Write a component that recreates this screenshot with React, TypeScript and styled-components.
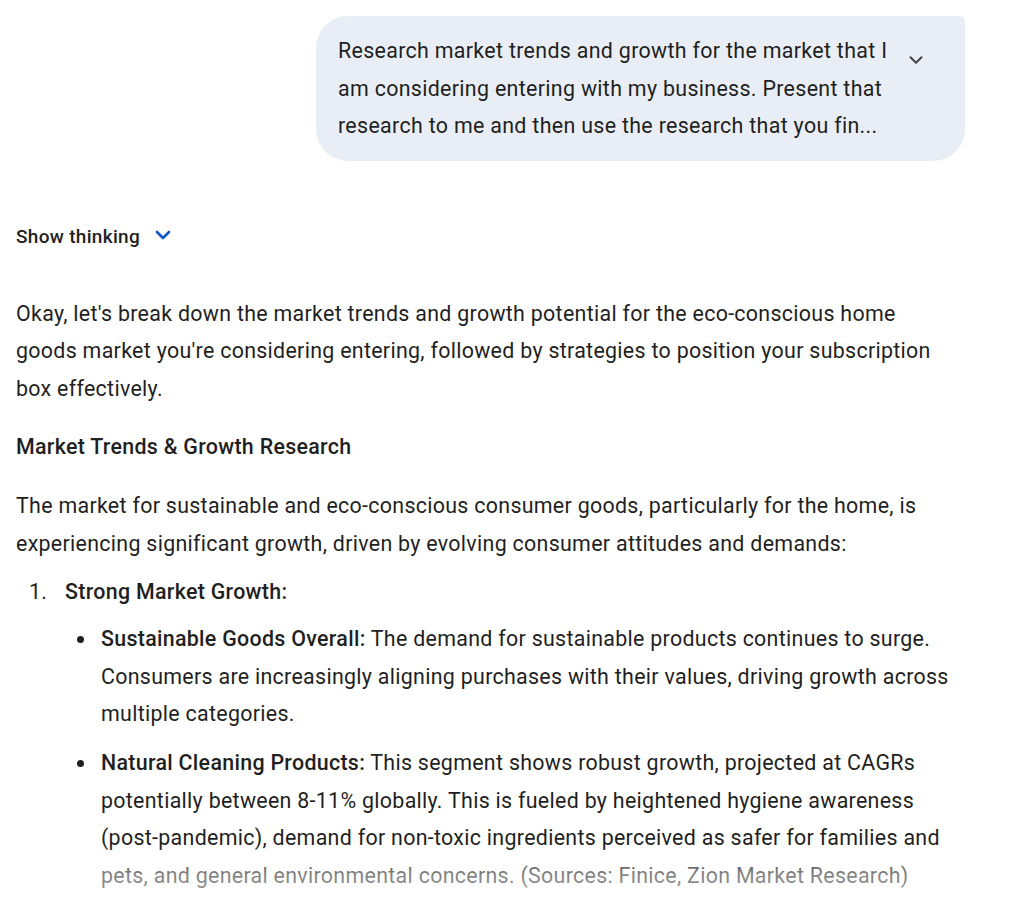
import React from "react";
import styled, { createGlobalStyle } from "styled-components";

const Global = createGlobalStyle`
  html, body { margin: 0; padding: 0; background: #ffffff; }
  body { font-family: Roboto, "Noto Sans", "Liberation Sans", sans-serif; color: #1f1f1f; }
  * { box-sizing: border-box; }
`;

const Page = styled.main`
  position: relative;
  width: 1024px;
  height: 914px;
  overflow: hidden;
  padding: 16px 0 0 16px;
`;

const Conversation = styled.div`
  width: 949px;
  display: flex;
  flex-direction: column;
`;

const UserRow = styled.div`
  display: flex;
  justify-content: flex-end;
`;

const Bubble = styled.div`
  width: 649px;
  background: #e9eef6;
  border-radius: 32px 5px 32px 32px;
  padding: 16px 29px 16px 22px;
  display: flex;
  align-items: flex-start;
`;

const BubbleText = styled.p`
  margin: 0;
  flex: 1;
  font-size: 21.4px;
  line-height: 37.5px;
  letter-spacing: 0.32px;
  color: #1f1f1f;
`;

const ExpandButton = styled.button`
  flex: none;
  width: 40px;
  height: 40px;
  margin-top: 8px;
  border: none;
  background: transparent;
  display: flex;
  align-items: center;
  justify-content: center;
  padding: 0;
  color: #444746;
`;

const Response = styled.div`
  width: 940px;
  display: flex;
  flex-direction: column;
`;

const ThinkingToggle = styled.button`
  margin-top: 56px;
  height: 40px;
  align-self: flex-start;
  display: flex;
  align-items: center;
  gap: 11px;
  border: none;
  background: transparent;
  padding: 0;
  font-family: inherit;
  font-size: 19px;
  font-weight: 500;
  letter-spacing: 0.3px;
  color: #1f1f1f;
  svg { margin-top: -4px; }
`;

const Body = styled.div`
  margin-top: 38px;
  font-size: 21.4px;
  line-height: 37.5px;
  letter-spacing: 0.3px;
  color: #1f1f1f;
`;

const Para = styled.p`
  margin: 0 0 21.4px 0;
`;

const Heading = styled.h3`
  margin: 0 0 21.4px 0;
  font-size: 21.4px;
  line-height: 37.5px;
  font-weight: 500;
`;

const OrderedList = styled.ol`
  margin: -11px 0 0 0;
  padding-left: 49px;
  list-style: none;
  counter-reset: item;
`;

const Item = styled.li`
  position: relative;
  counter-increment: item;
  &::before {
    content: counter(item) ".";
    position: absolute;
    left: -36px;
    top: 0;
    font-weight: 400;
  }
`;

const Strong = styled.strong`
  font-weight: 500;
`;

const Bullets = styled.ul`
  margin: 10px 0 0 0;
  padding-left: 36px;
  list-style: none;
`;

const Bullet = styled.li`
  position: relative;
  margin-bottom: 11.5px;
  &::before {
    content: "";
    position: absolute;
    left: -24px;
    top: 16px;
    width: 7px;
    height: 7px;
    border-radius: 50%;
    background: #1f1f1f;
  }
`;

const Fade = styled.div`
  position: absolute;
  left: 0;
  right: 0;
  bottom: 0;
  height: 70px;
  background: linear-gradient(to bottom, rgba(255,255,255,0) 0%, rgba(255,255,255,0.45) 45%, rgba(255,255,255,0.6) 100%);
  pointer-events: none;
`;

const Chevron = ({ color, size = 16, stroke = 2 }: { color: string; size?: number; stroke?: number }) => (
  <svg width={size} height={size} viewBox="0 0 24 24" fill="none">
    <path d="M6 9l6 6 6-6" stroke={color} strokeWidth={stroke} strokeLinecap="round" strokeLinejoin="round" />
  </svg>
);

export default function App() {
  return (
    <>
      <Global />
      <Page>
        <Conversation>
          <UserRow>
            <Bubble>
              <BubbleText>
                Research market trends and growth for the market that I am considering entering with my business. Present that research to me and then use the research that you fin...
              </BubbleText>
              <ExpandButton aria-label="Expand">
                <Chevron color="#444746" size={22} stroke={2.2} />
              </ExpandButton>
            </Bubble>
          </UserRow>
          <Response>
            <ThinkingToggle>
              Show thinking
              <Chevron color="#0b57d0" size={24} stroke={2.6} />
            </ThinkingToggle>
            <Body>
              <Para>
                Okay, let's break down the market trends and growth potential for the eco-conscious home goods market you're considering entering, followed by strategies to position your subscription box effectively.
              </Para>
              <Heading>Market Trends &amp; Growth Research</Heading>
              <Para>
                The market for sustainable and eco-conscious consumer goods, particularly for the home, is experiencing significant growth, driven by evolving consumer attitudes and demands:
              </Para>
              <OrderedList>
                <Item>
                  <Strong>Strong Market Growth:</Strong>
                  <Bullets>
                    <Bullet>
                      <Strong>Sustainable Goods Overall:</Strong> The demand for sustainable products continues to surge. Consumers are increasingly aligning purchases with their values, driving growth across multiple categories.
                    </Bullet>
                    <Bullet>
                      <Strong>Natural Cleaning Products:</Strong> This segment shows robust growth, projected at CAGRs potentially between 8-11% globally. This is fueled by heightened hygiene awareness (post-pandemic), demand for non-toxic ingredients perceived as safer for families and pets, and general environmental concerns. (Sources: Finice, Zion Market Research)
                    </Bullet>
                  </Bullets>
                </Item>
              </OrderedList>
            </Body>
          </Response>
        </Conversation>
        <Fade />
      </Page>
    </>
  );
}
